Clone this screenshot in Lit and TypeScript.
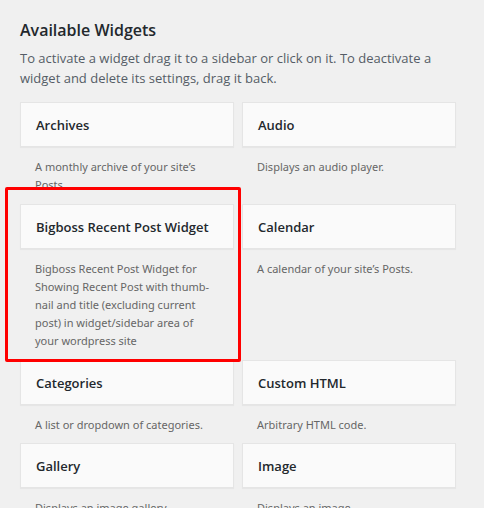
import { LitElement, html, css } from "lit";
import { customElement } from "lit/decorators.js";

interface Widget {
  name: string;
  text: string;
  kind?: string;
}

const rows: Widget[][] = [
  [
    { name: "Archives", text: "A monthly archive of your site’s Posts.", kind: "clipped" },
    { name: "Audio", text: "Displays an audio player." },
  ],
  [
    {
      name: "Bigboss Recent Post Widget",
      text: "Bigboss Recent Post Widget for Showing Recent Post with thumb\u00adnail and title (excluding current post) in widget/sidebar area of your wordpress site",
      kind: "marked",
    },
    { name: "Calendar", text: "A calendar of your site’s Posts." },
  ],
  [
    { name: "Categories", text: "A list or dropdown of categories." },
    { name: "Custom HTML", text: "Arbitrary HTML code." },
  ],
  [
    { name: "Gallery", text: "Displays an image gallery." },
    { name: "Image", text: "Displays an image." },
  ],
];

@customElement("app-root")
export class AppRoot extends LitElement {
  static styles = css`
    :host {
      display: block;
      height: 100vh;
      overflow: hidden;
      box-sizing: border-box;
      padding: 20px 28px 0 20px;
      background: #f0f0f0;
      color: #23282d;
      font-family: "Open Sans", "Noto Sans", sans-serif;
    }
    h2 {
      margin: 0;
      font-size: 16px;
      line-height: 20px;
      font-weight: 600;
    }
    .intro {
      margin: 8px 0 14px;
      font-size: 13px;
      line-height: 20px;
      color: #555d66;
    }
    .row {
      display: grid;
      grid-template-columns: 1fr 1fr;
      column-gap: 8px;
    }
    .widget {
      position: relative;
      min-width: 0;
    }
    h3 {
      margin: 0;
      font: inherit;
    }
    .title {
      display: block;
      width: 100%;
      height: 45px;
      box-sizing: border-box;
      padding: 0 15px;
      border: 1px solid #e5e5e5;
      background: #fafafa;
      box-shadow: 0 1px 1px rgba(0, 0, 0, 0.04);
      color: #23282d;
      font-family: inherit;
      font-size: 13px;
      line-height: 20px;
      font-weight: 600;
      text-align: left;
      white-space: nowrap;
    }
    .desc {
      margin: 0;
      padding: 11px 15px 9px;
      font-family: "Noto Sans", "Open Sans", sans-serif;
      font-size: 11px;
      line-height: 18px;
      color: #666;
    }
    .clipped .desc,
    .marked .desc {
      padding-bottom: 10px;
    }
    .marked {
      z-index: 1;
    }
    .marked::after {
      content: "";
      position: absolute;
      inset: -17px -7px -2px -15px;
      border: 3px solid #ff0000;
      border-radius: 2px;
      pointer-events: none;
    }
  `;

  render() {
    return html`
      <h2>Available Widgets</h2>
      <p class="intro">
        To activate a widget drag it to a sidebar or click on it. To deactivate a widget and delete its settings, drag it back.
      </p>
      ${rows.map(
        (row) => html`<div class="row">
          ${row.map(
            (w) => html`<div class="widget ${w.kind ?? ""}">
              <h3><button class="title" type="button">${w.name}</button></h3>
              <p class="desc">${w.text}</p>
            </div>`,
          )}
        </div>`,
      )}
    `;
  }
}
